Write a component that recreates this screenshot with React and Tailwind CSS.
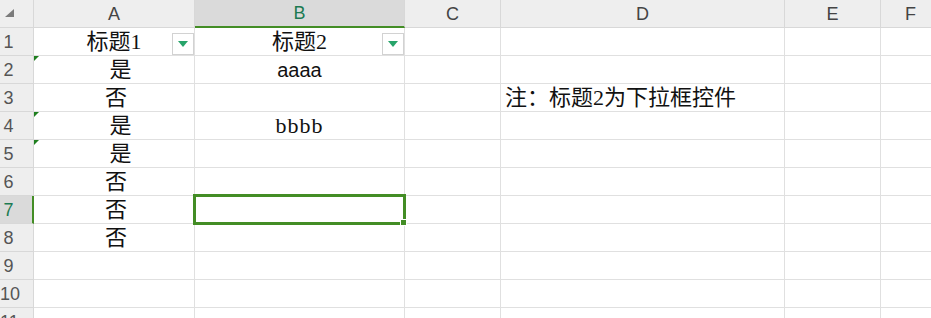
import React from "react";

const cols = ["A", "B", "C", "D", "E", "F"];
const LINE = "border-[#e0e0e0]";
const CELLFONT = { fontFamily: '"Liberation Serif", "Noto Sans CJK SC", serif' };
const SANSFONT = { fontFamily: '"Liberation Sans", "Noto Sans CJK SC", sans-serif' };

function Dropdown() {
  return (
    <div className="absolute right-0 bottom-0 w-[22px] h-[22px] border border-[#d2d2d2] bg-white flex items-center justify-center">
      <svg width="10" height="6" viewBox="0 0 10 6">
        <polygon points="0,0 10,0 5,6" fill="#27a46a" />
      </svg>
    </div>
  );
}

function Flag() {
  return (
    <div className="absolute left-0 top-0 w-0 h-0 border-t-[5px] border-r-[5px] border-t-[#1f7f1f] border-r-transparent" />
  );
}

const data = {
  1: { A: { t: "标题1", dd: true }, B: { t: "标题2", dd: true } },
  2: { A: { t: "是", flag: true, shift: "pl-[13px]" }, B: { t: "aaaa", sans: true } },
  3: { A: { t: "否", shift: "pl-[4px]" }, D: { t: "注：标题2为下拉框控件", left: true } },
  4: { A: { t: "是", flag: true, shift: "pl-[13px]" }, B: { t: "bbbb", track: true } },
  5: { A: { t: "是", flag: true, shift: "pl-[13px]" } },
  6: { A: { t: "否", shift: "pl-[4px]" } },
  7: { A: { t: "否", shift: "pl-[4px]" } },
  8: { A: { t: "否", shift: "pl-[4px]" } },
};

export default function App() {
  const rows = Array.from({ length: 11 }, (_, i) => i + 1);
  return (
    <div className="relative w-[931px] h-[318px] overflow-hidden bg-white">
      <div className="grid grid-cols-[34px_161px_210px_96px_284px_96px_60px] auto-rows-[28px]">
        <div className="relative bg-[#eeeeee] border-r border-b border-[#d8d8d8]">
          <svg className="absolute left-0 top-0" width="20" height="20" viewBox="0 0 20 20">
            <polygon points="14,9 14,17 5,17" fill="#7b7b7b" />
          </svg>
        </div>
        {cols.map((c) => (
          <div
            key={c}
            className={
              c === "B"
                ? "bg-[#dadada] border-r border-r-[#d8d8d8] border-b-2 border-b-[#438d25] flex items-center justify-center text-[18px] text-[#1d7a52]"
                : "bg-[#eeeeee] border-r border-b border-[#d8d8d8] flex items-center justify-center text-[18px] text-[#444444]"
            }
            style={{ fontFamily: '"Liberation Sans", Arial, sans-serif' }}
          >
            <span className="pt-[1px]">{c}</span>
          </div>
        ))}
        {rows.map((r) => (
          <React.Fragment key={r}>
            <div
              className={
                r === 7
                  ? "bg-[#dadada] border-r-2 border-r-[#438d25] border-b border-b-[#d8d8d8] flex items-center text-[18px] text-[#1d7a52]"
                  : "bg-[#eeeeee] border-r border-b border-[#d8d8d8] flex items-center text-[18px] text-[#555555]"
              }
              style={{ fontFamily: '"Liberation Sans", Arial, sans-serif' }}
            >
              <span className="w-[17px] text-center pt-[1px]">{r}</span>
            </div>
            {cols.map((c) => {
              const cell = data[r] && data[r][c];
              return (
                <div
                  key={c}
                  className={`relative border-r border-b ${LINE} flex items-end ${
                    cell && cell.left ? "justify-start pl-[4px]" : "justify-center"
                  }`}
                >
                  {cell && (
                    <span
                      className={`${cell.sans ? "text-[20px]" : "text-[22px]"} leading-[26px] text-[#111111] ${
                        cell.shift || ""
                      } ${cell.track ? "tracking-[1px]" : ""}`}
                      style={cell.sans ? SANSFONT : CELLFONT}
                    >
                      {cell.t}
                    </span>
                  )}
                  {cell && cell.dd && <Dropdown />}
                  {cell && cell.flag && <Flag />}
                </div>
              );
            })}
          </React.Fragment>
        ))}
      </div>
      <div className="absolute left-[193px] top-[194px] w-[213px] h-[31px] border-[3px] border-[#438d25]" />
      <div className="absolute left-[400px] top-[219px] w-[7px] h-[7px] bg-[#438d25] border border-white" />
    </div>
  );
}
